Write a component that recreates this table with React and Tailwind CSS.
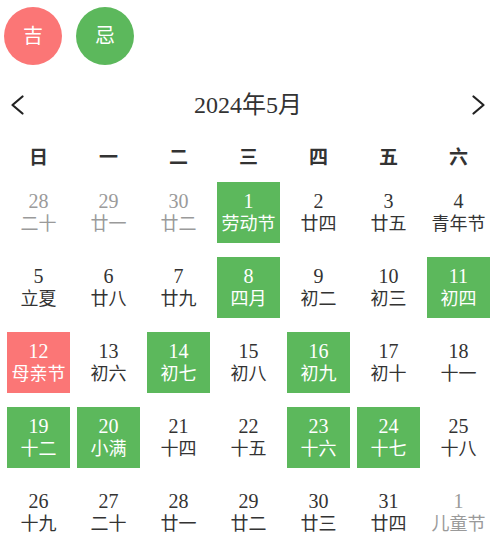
const weekdays = ['日', '一', '二', '三', '四', '五', '六']

// 2024年5月
const days = [
  [28, '二十', 'other'], [29, '廿一', 'other'], [30, '廿二', 'other'], [1, '劳动节', 'good'], [2, '廿四'], [3, '廿五'], [4, '青年节'],
  [5, '立夏'], [6, '廿八'], [7, '廿九'], [8, '四月', 'good'], [9, '初二'], [10, '初三'], [11, '初四', 'good'],
  [12, '母亲节', 'bad'], [13, '初六'], [14, '初七', 'good'], [15, '初八'], [16, '初九', 'good'], [17, '初十'], [18, '十一'],
  [19, '十二', 'good'], [20, '小满', 'good'], [21, '十四'], [22, '十五'], [23, '十六', 'good'], [24, '十七', 'good'], [25, '十八'],
  [26, '十九'], [27, '二十'], [28, '廿一'], [29, '廿二'], [30, '廿三'], [31, '廿四'], [1, '儿童节', 'other'],
]

const boxStyle = {
  good: 'bg-[#5cb85c] text-white',
  bad: 'bg-[#fb7676] text-white',
  other: 'text-[#9a9a9a]',
}

const Chevron = ({ dir }) => (
  <svg width="13" height="20" viewBox="0 0 13 20" fill="none" stroke="#222" strokeWidth="2.2" strokeLinecap="round" strokeLinejoin="round">
    {dir === 'left' ? <polyline points="11.5,1.5 1.5,10 11.5,18.5" /> : <polyline points="1.5,1.5 11.5,10 1.5,18.5" />}
  </svg>
)

export default function App() {
  return (
    <div className="min-h-screen bg-white pt-[7px] text-[#333] font-['Liberation_Serif','Noto_Sans_CJK_SC',serif]">
      {/* 吉 / 忌 */}
      <div className="flex gap-[14px] pl-[4px]">
        <div className="w-[58px] h-[58px] rounded-full bg-[#fb7676] text-white flex items-center justify-center text-[20px]">吉</div>
        <div className="w-[58px] h-[58px] rounded-full bg-[#5cb85c] text-white flex items-center justify-center text-[20px]">忌</div>
      </div>

      {/* Header */}
      <div className="mt-[14px] h-[52px] flex items-center justify-between pl-[11px] pr-[15px]">
        <Chevron dir="left" />
        <span className="text-[24px]">2024年5月</span>
        <Chevron dir="right" />
      </div>

      {/* Weekdays */}
      <div className="mt-[9px] h-[36px] w-[490px] ml-[3.5px] grid grid-cols-7 items-center">
        {weekdays.map(w => (
          <div key={w} className="text-center text-[19px] font-bold">{w}</div>
        ))}
      </div>

      {/* Days */}
      <div className="mt-[6px] w-[490px] ml-[3.5px] grid grid-cols-7 auto-rows-[75px]">
        {days.map(([d, l, t], i) => (
          <div key={i} className="flex justify-center">
            <div className={`w-[63px] h-[61px] flex flex-col items-center justify-center ${t ? boxStyle[t] : ''}`}>
              <span className="text-[20px] leading-[22px]">{d}</span>
              <span className="text-[18px] leading-[24px]">{l}</span>
            </div>
          </div>
        ))}
      </div>
    </div>
  )
}
